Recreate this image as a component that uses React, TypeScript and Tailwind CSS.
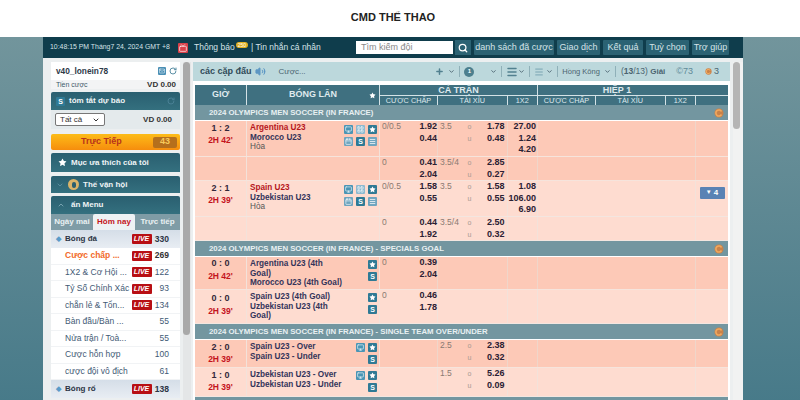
import React from "react";
import { Search, Volume2, Plus, ChevronDown, RotateCw, Star, Monitor, Menu, Calendar, LayoutGrid, Mail, Tv } from "lucide-react";

const c0 = "w-[52px]";
const c1 = "w-[133px]";

// small square icon used beside the teams
function Tile({ kind }: { kind: "tv" | "grid" | "star" | "chart" | "s" | "list" }) {
  const bg =
    kind === "s" || kind === "star" ? "bg-[#2f7a95]" : kind === "tv" ? "bg-[#4a95b5]" : kind === "grid" ? "bg-[#8dbad0]" : "bg-[#6ea5bf]";
  return (
    <span className={`flex h-[9px] w-[9px] items-center justify-center rounded-[1px] text-white ${bg}`}>
      {kind === "star" && <Star size={7} fill="white" strokeWidth={0} />}
      {kind === "s" && <span className="text-[7px] leading-none font-bold">S</span>}
      {kind === "tv" && <Monitor size={7} strokeWidth={2} />}
      {kind === "grid" && <LayoutGrid size={7} strokeWidth={2} />}
      {kind === "chart" && <Calendar size={7} strokeWidth={2} />}
      {kind === "list" && <Menu size={7} strokeWidth={2.5} />}
    </span>
  );
}

function Refresh({ className = "h-[10px] w-[10px]" }: { className?: string }) {
  return (
    <svg viewBox="0 0 10 10" className={className}>
      <circle cx="5" cy="5" r="4.5" fill="#c9824a" />
      <path d="M7.5 3.5A3 3 0 1 0 7.5 6.5" fill="none" stroke="#f0a95f" strokeWidth="1.6" />
    </svg>
  );
}

function League({ title, h = "h-[16px]" }: { title: string; h?: string }) {
  return (
    <div className={`flex items-center justify-between border-b border-white bg-[#7396a0] pr-[4px] pl-[14px] text-[7.8px] font-bold text-[#e8f0f2] ${h}`}>
      <span>{title}</span>
      <Refresh />
    </div>
  );
}

type Odds = { hdp?: string; a?: string; b?: string; tot?: string; o?: string; u?: string; x?: string[] };

function OddsCols({ odds, dark, more }: { odds: Odds; dark: boolean; more?: boolean }) {
  const line = dark ? "border-[#f0d6ca]" : "border-[#f3e2da]";
  return (
    <>
      <div className={`flex w-[58px] justify-between border-r pl-[2px] ${line}`}>
        <span className="text-[8.5px] text-[#8a7a72]">{odds.hdp}</span>
        <span className="flex flex-col text-right font-bold text-[#2a2033]">
          <span>{odds.a}</span>
          <span>{odds.b}</span>
        </span>
      </div>
      <div className={`flex w-[69.5px] justify-between border-r pr-[2px] pl-[2px] ${line}`}>
        <span className="text-[8.5px] text-[#8a7a72]">{odds.tot}</span>
        <span className="flex gap-[9px]">
          <span className="flex flex-col text-[7px] text-[#a89a92]">
            {odds.o && <span>o</span>}
            {odds.o && <span>u</span>}
          </span>
          <span className="flex w-[24px] flex-col text-right font-bold text-[#2a2033]">
            <span>{odds.o}</span>
            <span>{odds.u}</span>
          </span>
        </span>
      </div>
      <div className={`flex w-[30.5px] flex-col border-r pr-[1px] text-right font-bold text-[#2a2033] ${line}`}>
        {odds.x?.map((v) => <span key={v}>{v}</span>)}
      </div>
      <div className={`w-[158px] border-r ${line}`} />
      <div className="flex flex-1 items-start justify-center pt-[6px]">
        {more && (
          <span className="flex h-[12px] w-[25px] items-center justify-center gap-[2px] rounded-[1px] bg-[#5a82b4] text-[8px] font-bold text-white">
            <span className="text-[6px]">▼</span>4
          </span>
        )}
      </div>
    </>
  );
}

function MatchRow({
  score,
  time,
  teams,
  icons,
  odds,
  dark,
  h,
  more,
  timeGap = "",
  scorePad = "pt-[2px]",
}: {
  score?: string;
  time?: string;
  teams?: React.ReactNode;
  icons?: React.ReactNode;
  odds: Odds;
  dark: boolean;
  h: string;
  more?: boolean;
  timeGap?: string;
  scorePad?: string;
}) {
  return (
    <div className={`flex border-b text-[9px] leading-[11.5px] ${h} ${dark ? "border-[#f6e4dc] bg-[#fdc9b7]" : "border-[#f3e6e0] bg-[#fedcd0]"}`}>
      <div className={`${c0} shrink-0 border-r border-[#f3e2da] text-center ${scorePad}`}>
        <div className="font-bold text-[#33283a]">{score}</div>
        <div className={`text-[8.5px] font-bold text-[#c4141c] ${timeGap}`}>{time}</div>
      </div>
      <div className={`${c1} flex shrink-0 justify-between border-r border-[#f3e2da] pt-[2px] pr-[2px] pl-[3px]`}>
        <div className="text-[8.2px] leading-[9.7px] font-bold whitespace-nowrap text-[#34345a]">{teams}</div>
        {icons}
      </div>
      <OddsCols odds={odds} dark={dark} more={more} />
    </div>
  );
}

const fullIcons = (
  <div className="mt-[2px] grid h-fit grid-cols-3 gap-x-[3px] gap-y-[3px]">
    <Tile kind="tv" />
    <Tile kind="grid" />
    <Tile kind="star" />
    <Tile kind="chart" />
    <Tile kind="s" />
    <Tile kind="list" />
  </div>
);
const smallIcons = (
  <div className="mt-[1px] flex h-fit flex-col gap-[3px]">
    <Tile kind="star" />
    <Tile kind="s" />
  </div>
);
const tvIcons = (
  <div className="mt-[1px] grid h-fit grid-cols-2 gap-x-[3px] gap-y-[3px]">
    <Tile kind="tv" />
    <Tile kind="star" />
    <span />
    <Tile kind="s" />
  </div>
);

function Red({ children }: { children: React.ReactNode }) {
  return <div className="text-[#b5161c]">{children}</div>;
}

function Panel({ children, className = "" }: { children: React.ReactNode; className?: string }) {
  return (
    <div className={`flex items-center gap-[4px] rounded-t-[2px] bg-gradient-to-b from-[#2a5f70] to-[#34707f] px-[5px] text-[8px] font-bold whitespace-nowrap text-[#eef4f6] ${className}`}>
      {children}
    </div>
  );
}

function Live() {
  return <span className="flex h-[10px] w-[20px] items-center justify-center rounded-[1px] bg-[#b80f14] text-[7px] font-bold text-white italic">LIVE</span>;
}

function MenuRow({ label, n, live, orange }: { label: string; n: string; live?: boolean; orange?: boolean }) {
  return (
    <div className="flex h-[16.5px] items-center border-b border-[#f1f3f5] bg-white text-[8.5px] text-[#3f5a75]">
      <span className={`w-[80px] truncate pl-[14px] ${orange ? "font-bold text-[#f26a2a]" : ""}`}>{label}</span>
      <span className="flex w-[21px] justify-center">{live && <Live />}</span>
      <span className={`flex-1 pr-[11px] text-right ${orange ? "font-bold text-[#333]" : ""}`}>{n}</span>
    </div>
  );
}

function SportRow({ label, n, h }: { label: string; n: string; h: string }) {
  return (
    <div className={`flex items-center bg-gradient-to-b from-[#d5dee8] to-[#e8edf3] text-[8px] font-bold text-[#2b3444] ${h}`}>
      <span className="w-[80px] pl-[5px]">
        <span className="mr-[4px] text-[7px] text-[#5b9bc9]">◆</span>
        {label}
      </span>
      <span className="flex w-[21px] justify-center"><Live /></span>
      <span className="flex-1 pr-[11px] text-right text-[8.5px]">{n}</span>
    </div>
  );
}

function Sidebar() {
  return (
    <div className="flex w-[129px] shrink-0 flex-col">
      <div className="flex h-[18px] items-center justify-between bg-white pr-[3px] pl-[5px] text-[8.3px] font-bold text-[#2e3a48]">
        <span>v40_lonein78</span>
        <span className="flex items-center gap-[3px]">
          <span className="flex h-[8px] w-[8px] items-center justify-center rounded-[1px] bg-[#4a8fb5]">
            <Mail size={6} className="text-white" />
          </span>
          <RotateCw size={8} strokeWidth={3} className="text-[#5a8fa5]" />
        </span>
      </div>
      <div className="flex h-[9px] items-center justify-between bg-[#f3f4f5] pr-[4px] pl-[5px] text-[7px] leading-none text-[#3e5a6a]">
        <span>Tiền cược</span>
        <span className="text-[8px] font-bold text-[#333]">VD 0.00</span>
      </div>
      <Panel className="mt-[3px] h-[18px]">
        <Tile kind="s" />
        <span className="flex-1">tóm tắt dự báo</span>
        <RotateCw size={8} strokeWidth={3} className="text-[#4a8195]" />
      </Panel>
      <div className="flex h-[19px] items-center justify-between bg-[#e4eaec] pr-[8px] pl-[4px] text-[8px] text-[#333]">
        <span className="flex h-[13px] w-[50px] items-center justify-between rounded-[2px] border border-[#777] bg-white px-[4px]">
          Tất cả <ChevronDown size={8} strokeWidth={3} />
        </span>
        <span className="font-bold">VD 0.00</span>
      </div>
      <div className="mt-[5px] flex h-[16px] items-center rounded-[2px] bg-gradient-to-b from-[#fcbc18] to-[#f68d0d] text-[9px] font-bold text-[#b8331a]">
        <span className="pl-[30px]">Trực Tiếp</span>
        <span className="mr-[3px] ml-auto flex h-[11px] w-[24px] items-center justify-center rounded-[2px] bg-[#b56f1c] text-[9px] text-[#f7c95a]">43</span>
      </div>
      <Panel className="mt-[3px] h-[19px]">
        <Star size={9} fill="white" strokeWidth={0} className="ml-[2px]" />
        <span>Mục ưa thích của tôi</span>
      </Panel>
      <Panel className="mt-[4px] h-[17px]">
        <ChevronDown size={8} className="text-[#6f9fb0]" />
        <span className="flex h-[11px] w-[11px] items-center justify-center rounded-full bg-[#d9b46a]">
          <span className="h-[6px] w-[4px] rounded-full bg-[#2a5f70]" />
        </span>
        <span>Thế vận hội</span>
      </Panel>
      <Panel className="mt-[3px] h-[18px]">
        <ChevronDown size={8} className="ml-[1px] rotate-180 text-[#9cc0cc]" />
        <span className="ml-[2px]">ẩn Menu</span>
      </Panel>
      <div className="flex h-[16px] bg-[#7f9ca6] text-[8px] font-bold whitespace-nowrap text-[#e9f0f2]">
        <span className="flex w-[42px] items-center justify-center">Ngày mai</span>
        <span className="flex w-[42px] items-center justify-center rounded-t-[2px] bg-[#eef2f4] text-[#c4141c]">Hôm nay</span>
        <span className="flex flex-1 items-center justify-center">Trực tiếp</span>
      </div>
      <SportRow label="Bóng đá" n="330" h="h-[18px]" />
      <MenuRow label="Cược chấp ..." n="269" live orange />
      <MenuRow label="1X2 & Cơ Hội ..." n="122" live />
      <MenuRow label="Tỷ Số Chính Xác" n="93" live />
      <MenuRow label="chẵn lẻ & Tổn..." n="134" live />
      <MenuRow label="Bàn đầu/Bàn ..." n="55" />
      <MenuRow label="Nửa trận / Toà..." n="55" />
      <MenuRow label="Cược hỗn hợp" n="100" />
      <MenuRow label="cược đội vô địch" n="61" />
      <SportRow label="Bóng rổ" n="138" h="h-[18px]" />
    </div>
  );
}

function Toolbar() {
  const sep = <span className="h-[11px] w-px bg-[#8fb0b8]" />;
  return (
    <div className="flex h-[19px] items-center bg-[#bcd8dc] pr-[11px] pl-[7px] text-[8px] text-[#4b6470]">
      <span className="text-[9px] font-bold text-[#2f4a58]">các cặp đấu</span>
      <Volume2 size={11} fill="#5d97c4" className="ml-[3px] text-[#5d97c4]" />
      <span className="ml-[13px]">Cược...</span>
      <div className="ml-auto flex items-center gap-[4px] whitespace-nowrap">
        <Plus size={9} strokeWidth={4} className="text-[#52808f]" />
        <ChevronDown size={7} strokeWidth={3} />
        {sep}
        <span className="flex h-[10px] w-[10px] items-center justify-center rounded-full bg-[#4c7f8e] text-[6px] font-bold text-white">1</span>
        <ChevronDown size={7} strokeWidth={3} className="ml-[12px]" />
        {sep}
        <Menu size={12} strokeWidth={3} className="text-[#52808f]" />
        <ChevronDown size={7} strokeWidth={3} className="-ml-[4px]" />
        {sep}
        <Menu size={10} strokeWidth={2} className="text-[#6c9aab]" />
        <ChevronDown size={7} strokeWidth={3} className="-ml-[2px]" />
        {sep}
        <span className="text-[7.5px]">Hồng Kông</span>
        <ChevronDown size={7} strokeWidth={3} />
        {sep}
        <span className="ml-[1px] text-[8.5px]">(<b>13</b>/13) <b className="text-[8px]">Giải</b></span>
        <span className="ml-[7px] text-[9px] text-[#5f8a98]">©73</span>
        <span className="ml-[8px] flex items-center gap-[2px] text-[9px]"><Refresh className="h-[7px] w-[7px]" />3</span>
      </div>
    </div>
  );
}

function TableHead() {
  const sub = (w: string, t: string) => (
    <span className={`flex items-center justify-center border-r border-[#d4e2e6] ${w}`}>{t}</span>
  );
  return (
    <div className="flex h-[20px] bg-[#3f7080] text-[7.3px] text-[#dfeaee]">
      <span className={`${c0} flex shrink-0 items-center justify-center border-r border-[#d4e2e6] text-[9px] font-bold`}>GIỜ</span>
      <span className={`${c1} relative flex shrink-0 items-center justify-center border-r border-[#d4e2e6] text-[9px] font-bold`}>
        BÓNG LĂN
        <Star size={7} fill="white" strokeWidth={0} className="absolute right-[3px]" />
      </span>
      <div className="flex flex-1 flex-col">
        <div className="flex h-[10px] text-[9px] leading-[10px] font-bold">
          <span className="w-[158px] border-r border-[#d4e2e6] text-center">CẢ TRẬN</span>
          <span className="w-[158px] text-center">HIỆP 1</span>
        </div>
        <div className="flex flex-1 border-t border-[#d4e2e6] leading-none">
          {sub("w-[58px]", "CƯỢC CHẤP")}
          {sub("w-[69.5px]", "TÀI XỈU")}
          {sub("w-[30.5px]", "1X2")}
          {sub("w-[58px]", "CƯỢC CHẤP")}
          {sub("w-[69.5px]", "TÀI XỈU")}
          {sub("w-[30.5px]", "1X2")}
        </div>
      </div>
    </div>
  );
}

export default function App() {
  const title = "2024 OLYMPICS MEN SOCCER (IN FRANCE)";
  return (
    <div className="flex h-[400px] w-[800px] flex-col overflow-hidden bg-white font-['Liberation_Sans',sans-serif]">
      <div className="flex h-[37px] shrink-0 items-center justify-center pr-[14px] pb-[3px] text-[11px] font-bold text-[#222]">CMD THỂ THAO</div>
      <div className="flex flex-1 flex-col bg-gradient-to-b from-[#72959c] to-[#477a89] pr-[57px] pl-[43px]">
        {/* top nav */}
        <div className="flex h-[21px] shrink-0 items-center bg-[#0f3d4c] pl-[7px] text-[9px] whitespace-nowrap text-[#d5e3e8]">
          <span className="w-[128px] text-[6.9px]">10:48:15 PM Tháng7 24, 2024 GMT +8</span>
          <span className="flex h-[10px] w-[10px] items-center justify-center rounded-[1px] bg-[#d9414a]"><Tv size={8} className="text-white" /></span>
          <span className="ml-[6px] text-[8.5px]">Thông báo</span>
          <span className="mb-[5px] ml-[1px] rounded-full bg-[#e0b020] px-[2px] text-[5px] leading-[6px] text-white">250</span>
          <span className="ml-[3px] text-[8.5px]">| Tin nhắn cá nhân</span>
          <span className="ml-auto flex h-[13px] w-[97px] items-center bg-white pl-[5px] text-[#888]">Tìm kiếm đội</span>
          <span className="ml-[2px] flex h-[15px] w-[16px] items-center justify-center bg-[#2b6273]"><Search size={10} strokeWidth={3} className="text-white" /></span>
          <div className="mr-[14px] ml-[3px] flex gap-[3px]">
            {[["danh sách đã cược", "w-[80px]"], ["Giao dịch", "w-[43px]"], ["Kết quả", "w-[40px]"], ["Tuỳ chọn", "w-[43px]"], ["Trợ giúp", "w-[37px]"]].map(([t, w]) => (
              <span key={t} className={`flex h-[15px] items-center justify-center rounded-[1px] bg-[#2b6273] ${w}`}>{t}</span>
            ))}
          </div>
        </div>
        {/* content */}
        <div className="flex flex-1 gap-[2px] overflow-hidden bg-[#eceff0] pt-[4px]">
          <div className="ml-[8px] flex">
            <Sidebar />
          </div>
          <div className="ml-[1px] flex w-[8px] bg-[#e4e6e7]">
            <span className="h-[273px] w-[7px] rounded-full bg-[#a9a9a9]" />
          </div>
          <div className="flex w-[537px] shrink-0 flex-col bg-white">
            <Toolbar />
            <div className="h-[4px]" />
            <div className="ml-[2px] w-[533px]">
              <TableHead />
              <League title={title} />
              <MatchRow h="h-[36px]" dark score="1 : 2" time="2H 42'" icons={fullIcons}
                teams={<><Red>Argentina U23</Red><div>Morocco U23</div><div className="font-normal text-[#555]">Hòa</div></>}
                odds={{ hdp: "0/0.5", a: "1.92", b: "0.44", tot: "3.5", o: "1.78", u: "0.48", x: ["27.00", "1.24", "4.20"] }} />
              <MatchRow h="h-[24px]" dark odds={{ hdp: "0", a: "0.41", b: "2.04", tot: "3.5/4", o: "2.85", u: "0.27" }} />
              <MatchRow h="h-[36px]" dark={false} more score="2 : 1" time="2H 39'" icons={fullIcons}
                teams={<><Red>Spain U23</Red><div>Uzbekistan U23</div><div className="font-normal text-[#555]">Hòa</div></>}
                odds={{ hdp: "0/0.5", a: "1.58", b: "0.55", tot: "3.5", o: "1.58", u: "0.55", x: ["1.08", "106.00", "6.90"] }} />
              <MatchRow h="h-[24px]" dark={false} odds={{ hdp: "0", a: "0.44", b: "1.92", tot: "3.5/4", o: "2.50", u: "0.32" }} />
              <League title={`${title} - SPECIALS GOAL`} />
              <MatchRow h="h-[33px]" dark score="0 : 0" time="2H 42'" icons={smallIcons} scorePad="pt-[1px]" timeGap="mt-[1px]"
                teams={<>Argentina U23 (4th<br />Goal)<br />Morocco U23 (4th Goal)</>}
                odds={{ hdp: "0", a: "0.39", b: "2.04" }} />
              <MatchRow h="h-[34px]" dark={false} score="0 : 0" time="2H 39'" icons={smallIcons} scorePad="pt-[3px]" timeGap="mt-[1px]"
                teams={<>Spain U23 (4th Goal)<br />Uzbekistan U23 (4th<br />Goal)</>}
                odds={{ hdp: "0", a: "0.46", b: "1.78" }} />
              <League title={`${title} - SINGLE TEAM OVER/UNDER`} />
              <MatchRow h="h-[28px]" dark score="2 : 0" time="2H 39'" icons={tvIcons}
                teams={<>Spain U23 - Over<br />Spain U23 - Under</>}
                odds={{ tot: "2.5", o: "2.38", u: "0.32" }} />
              <MatchRow h="h-[29px]" dark={false} score="1 : 0" time="2H 39'" icons={tvIcons}
                teams={<>Uzbekistan U23 - Over<br />Uzbekistan U23 - Under</>}
                odds={{ tot: "1.5", o: "5.26", u: "0.09" }} />
              <div className="h-[6px] bg-[#7396a0]" />
            </div>
          </div>
          <div className="ml-[1px] flex w-[10px] bg-[#f1f2f2]">
            <span className="h-[67px] w-[7px] rounded-full bg-[#b5b5b5]" />
          </div>
        </div>
      </div>
    </div>
  );
}
